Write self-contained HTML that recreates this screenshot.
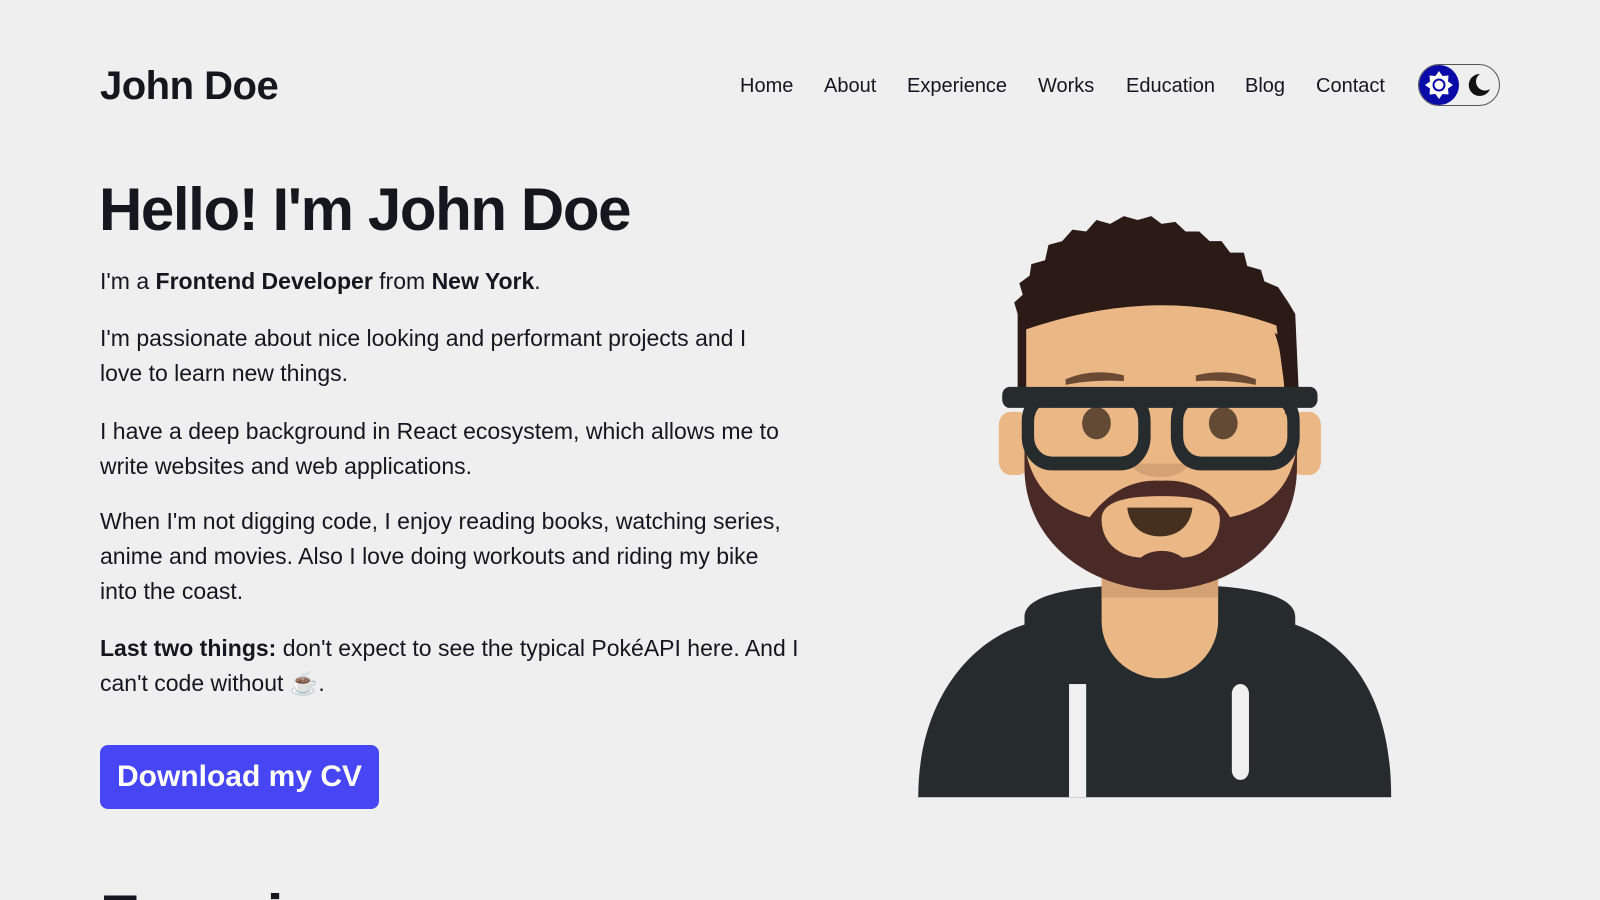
<!DOCTYPE html>
<html style="overflow:hidden;height:900px"><head><meta charset="utf-8"><style>
*{margin:0;padding:0;box-sizing:border-box}
body{width:1600px;height:900px;overflow:hidden;background:#efeff0;font-family:"Liberation Sans",sans-serif;color:#16161f}
#w{position:relative;width:1600px;height:900px;overflow:hidden}
.logo{position:absolute;left:100px;top:64px;font-size:40px;font-weight:bold;letter-spacing:-0.5px}
nav{position:absolute;top:75px;left:740px;font-size:20px;white-space:nowrap}
nav span{position:absolute;top:0}
.tog{position:absolute;left:1418px;top:64px;width:82px;height:42px;border:1.5px solid #555;border-radius:21px}
h1{position:absolute;left:99px;top:175px;font-size:60px;font-weight:bold;letter-spacing:-1.4px}
.p{position:absolute;left:100px;font-size:23px;line-height:35px;white-space:nowrap;letter-spacing:0px}
b{font-weight:bold}
.btn{position:absolute;left:100px;top:745px;width:279px;height:64px;background:#4646f5;border-radius:8px;color:#fff;font-weight:bold;font-size:30px;line-height:64px;text-align:center}
.h2{position:absolute;left:100px;top:882px;font-size:60px;font-weight:bold}
</style></head><body><div id="w">
<div class="logo">John Doe</div>
<nav><span style="left:0">Home</span><span style="left:84px">About</span><span style="left:167px">Experience</span><span style="left:298px">Works</span><span style="left:386px">Education</span><span style="left:505px">Blog</span><span style="left:576px">Contact</span></nav>
<div class="tog">
<svg width="82" height="42" viewBox="0 0 82 42" style="position:absolute;left:-1.5px;top:-1.5px">
<circle cx="21" cy="21" r="20" fill="#0a0aa8"/>
<path d="M21 7 L24.5 12 L30.5 11.5 L30 17.5 L35 21 L30 24.5 L30.5 30.5 L24.5 30 L21 35 L17.5 30 L11.5 30.5 L12 24.5 L7 21 L12 17.5 L11.5 11.5 L17.5 12 Z" fill="#fff"/>
<circle cx="21" cy="21" r="6.5" fill="#0a0aa8"/><circle cx="21" cy="21" r="4.5" fill="#fff"/>
<path d="M62 10 A11 11 0 1 0 72 25 A9 9 0 0 1 62 10 Z" fill="#111"/>
</svg></div>
<h1>Hello! I'm John Doe</h1>
<div class="p" style="top:264px">I'm a <b>Frontend Developer</b> from <b>New York</b>.</div>
<div class="p" style="top:321px">I'm passionate about nice looking and performant projects and I<br>love to learn new things.</div>
<div class="p" style="top:414px">I have a deep background in React ecosystem, which allows me to<br>write websites and web applications.</div>
<div class="p" style="top:504px">When I'm not digging code, I enjoy reading books, watching series,<br>anime and movies. Also I love doing workouts and riding my bike<br>into the coast.</div>
<div class="p" style="top:631px"><b>Last two things:</b> don't expect to see the typical PokéAPI here. And I<br>can't code without ☕.</div>
<div class="btn">Download my CV</div>
<div class="h2">Experience</div>
<svg width="1600" height="900" style="position:absolute;left:0;top:0">
<g transform="scale(1.02)">
<g transform="translate(870,195) scale(0.336,0.376)">
<path d="M90,1560 C90,1300 250,1150 400,1110 L400,1090 C400,1030 550,1005 800,1005 C1050,1005 1190,1030 1190,1090 L1190,1110 C1350,1160 1470,1300 1470,1560 Z" fill="#262b2e"/>
<path d="M625,950 L625,1100 A170,150 0 0 0 965,1100 L965,950 Z" fill="#ebb885"/>
<rect x="625" y="990" width="340" height="50" fill="#d4a173"/>
<rect x="530" y="1265" width="50" height="295" fill="#f0f0f0"/>
<rect x="1005" y="1265" width="50" height="250" rx="25" fill="#f0f0f0"/>
<rect x="325" y="555" width="90" height="165" rx="35" fill="#ebb885"/>
<rect x="1175" y="555" width="90" height="165" rx="35" fill="#ebb885"/>
<path d="M380,500 L380,300 L370,270 L395,250 L385,220 L415,200 L420,170 L460,160 L470,120 L510,110 L540,80 L580,85 L610,55 L650,65 L690,45 L730,55 L770,45 L800,65 L840,60 L870,85 L910,85 L940,110 L975,110 L1000,140 L1040,140 L1050,175 L1090,185 L1100,215 L1140,230 L1170,270 L1190,300 L1200,500 Z" fill="#2c1a16"/>
<path d="M405,340 Q800,220 1135,330 L1190,700 C1190,900 1000,1020 800,1020 C600,1020 405,900 405,700 Z" fill="#ebb885"/>
<path d="M1130,350 Q1190,370 1195,480 L1195,560 L1160,560 Q1160,420 1130,350 Z" fill="#2c1a16"/>
<path d="M400,640 L400,700 C400,900 600,1020 800,1020 C1000,1020 1195,900 1195,700 L1195,640 C1180,760 1100,810 1000,830 C950,760 880,730 800,735 C720,730 650,760 590,830 C500,810 420,760 400,640 Z" fill="#4a2a26"/>
<path d="M625,835 C625,785 710,775 800,775 C890,775 970,785 970,835 C970,905 910,935 860,935 C830,912 770,912 740,935 C690,935 625,905 625,835 Z" fill="#ebb885"/>
<path d="M700,805 L890,805 C885,850 850,880 795,880 C740,880 705,850 700,805 Z" fill="#45301f"/>
<path d="M710,690 L880,690 C870,715 830,725 795,725 C760,725 720,715 710,690 Z" fill="#d3a173"/>
<path d="M520,470 Q600,440 690,460 L690,475 Q600,470 520,485 Z" fill="#6b4a33"/>
<path d="M900,460 Q990,440 1075,470 L1075,485 Q990,470 900,475 Z" fill="#6b4a33"/>
<circle cx="610" cy="585" r="42" fill="#634a35"/><circle cx="980" cy="585" r="42" fill="#634a35"/>
<rect x="335" y="490" width="920" height="55" rx="22" fill="#262b2e"/>
<rect x="410" y="510" width="340" height="180" rx="70" fill="none" stroke="#262b2e" stroke-width="36"/>
<rect x="845" y="510" width="340" height="180" rx="70" fill="none" stroke="#262b2e" stroke-width="36"/>
</g></g></svg>
</div></body></html>
